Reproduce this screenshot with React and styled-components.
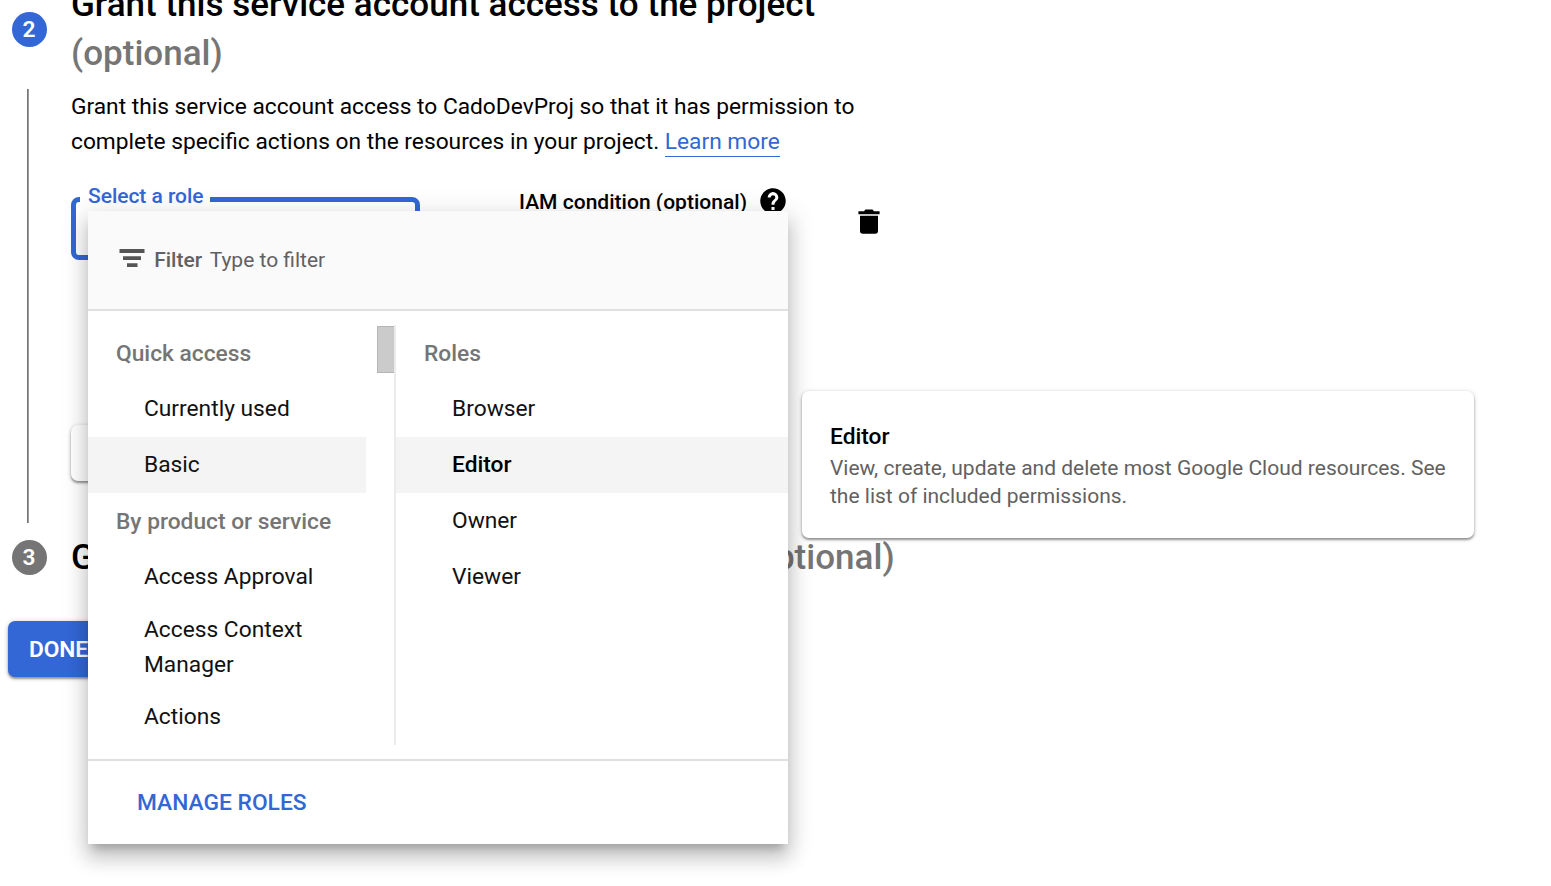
import React from 'react';
import styled, { createGlobalStyle } from 'styled-components';

const Global = createGlobalStyle`
  * { box-sizing: border-box; }
  body { margin: 0; background: #fff; font-family: Roboto, "Liberation Sans", sans-serif; overflow: hidden; }
`;

const BLUE = '#3367d6';

const Page = styled.main`
  position: relative;
  width: 1551px;
  height: 886px;
  overflow: hidden;
  color: #000;
  font-size: 22.75px;
  line-height: 35px;
  display: flow-root;
`;

const Step = styled.section`
  display: grid;
  grid-template-columns: 71px 830px;
  height: ${(p) => p.$height}px;
`;

const Rail = styled.div`
  display: flex;
  flex-direction: column;
  padding: ${(p) => p.$top}px 0 0 12px;
`;

const StepNumber = styled.div`
  width: 35px;
  height: 35px;
  padding-right: 1px;
  border-radius: 50%;
  background: ${(p) => (p.$active ? BLUE : '#757575')};
  color: #fff;
  font-weight: 600;
  font-size: 22.75px;
  text-align: center;
`;

const Connector = styled.div`
  width: 2px;
  height: 434px;
  margin: 42px 0 0 15px;
  background: #757575;
  border-right: 1px solid #9a9a9a;
`;

const StepBody = styled.div`
  display: flex;
  flex-direction: column;
`;

const Title = styled.h2`
  margin: ${(p) => p.$offset}px 0 0;
  font-size: 35px;
  line-height: 49px;
  font-weight: 500;
  letter-spacing: 0.02px;
  white-space: nowrap;
  span { color: #757575; }
`;

const Description = styled.p`
  margin: 11px 0 0;
  font-size: 22.74px;
  white-space: nowrap;
`;

const Link = styled.a`
  color: ${BLUE};
  border-bottom: 1px solid ${BLUE};
  padding-bottom: 1px;
`;

const RoleRow = styled.div`
  display: flex;
  align-items: flex-start;
  height: 63px;
  margin-top: 38px;
`;

const RoleField = styled.fieldset`
  width: 349px;
  height: 75px;
  margin: -12px 99px 0 0;
  padding: 0 0 0 4px;
  border: 5px solid ${BLUE};
  border-radius: 8px;
  min-width: 0;
`;

const FieldLabel = styled.legend`
  padding: 0 7px 6px 8px;
  font-size: 21px;
  line-height: 22px;
  font-weight: 500;
  letter-spacing: -0.04px;
  color: ${BLUE};
`;

const Condition = styled.div`
  display: flex;
  align-items: center;
  gap: 13px;
  width: 339px;
  height: 28px;
  margin-top: -9px;
  font-size: 21px;
  font-weight: 500;
  letter-spacing: 0.02px;
  svg { margin-top: -2px; }
`;

const DeleteIcon = styled.svg`
  width: 22px;
  height: 25px;
  margin-top: 12px;
`;

const AddRole = styled.button`
  width: 300px;
  height: 56px;
  margin-top: 165px;
  border: 0;
  border-radius: 7px;
  background: #fff;
  box-shadow: 0 2px 2px rgba(0,0,0,.3), 0 1px 4px rgba(0,0,0,.25);
`;

const DoneButton = styled.button`
  display: block;
  width: 104px;
  height: 56px;
  margin: 0 0 0 8px;
  padding: 0 0 0 21px;
  border: 0;
  border-radius: 7px;
  background: ${BLUE};
  color: #fff;
  font: 600 22.75px Roboto, sans-serif;
  letter-spacing: -0.1px;
  text-align: left;
  box-shadow: 0 2px 2px rgba(0,0,0,.3), 0 1px 5px rgba(0,0,0,.25);
`;

const RoleMenu = styled.div`
  position: absolute;
  left: 88px;
  top: 211px;
  width: 700px;
  height: 633px;
  display: flex;
  flex-direction: column;
  background: #fff;
  color: #111;
  box-shadow: 0 8.75px 8.75px -5.25px rgba(0,0,0,.2), 0 14px 17.5px 1.75px rgba(0,0,0,.14), 0 5.25px 24.5px 3.5px rgba(0,0,0,.12);
`;

const FilterBar = styled.div`
  display: flex;
  align-items: center;
  height: 100px;
  padding: 0 0 0 31px;
  background: #fafafa;
  border-bottom: 2px solid #e0e0e0;
  font-size: 21px;
  color: #616161;
  svg { margin-top: -4px; }
  b { font-weight: 500; margin: 0 7.5px 0 9.2px; }
`;

const Columns = styled.div`
  display: flex;
  height: 448px;
  padding: 14px 0;
`;

const Column = styled.div`
  display: flex;
  flex-direction: column;
  width: ${(p) => p.$width}px;
`;

const Categories = styled.div`
  display: flex;
  justify-content: space-between;
  width: 308px;
  border-right: 2px solid #ebebeb;
`;

const ScrollThumb = styled.div`
  width: 17px;
  height: 47px;
  margin-top: 1px;
  background: #cbcbcb;
  border: 1px solid #b5b5b5;
  border-right: 0;
`;

const GroupLabel = styled.div`
  height: 56px;
  padding: 11px 0 0 28px;
  color: #757575;
  font-weight: 500;
`;

const Option = styled.div`
  display: flex;
  align-items: center;
  height: ${(p) => (p.$tall ? 84 : 56)}px;
  padding: ${(p) => (p.$tall ? '0 28px 0 56px' : '0 28px 2px 56px')};
  background: ${(p) => (p.$selected ? '#f4f4f4' : 'transparent')};
  color: ${(p) => (p.$bold ? '#000' : '#111')};
  font-weight: ${(p) => (p.$bold ? 500 : 400)};
`;

const MenuFooter = styled.div`
  display: flex;
  align-items: center;
  height: 85px;
  padding-left: 49px;
  border-top: 2px solid #e0e0e0;
  color: ${BLUE};
  font-weight: 500;
  letter-spacing: 0.02px;
`;

const RoleTooltip = styled.aside`
  position: absolute;
  left: 802px;
  top: 391px;
  width: 672px;
  height: 147px;
  padding: 28px;
  border-radius: 7px;
  background: #fff;
  box-shadow: 0 2px 2px rgba(0,0,0,.3), 0 1px 4px rgba(0,0,0,.25);
  strong { display: block; font-weight: 500; }
  p { margin: 0; font-size: 21px; line-height: 28px; color: #616161; white-space: nowrap; }
`;

const Icon = styled.svg`
  display: block;
  flex: none;
`;

const HelpIcon = () => (
  <Icon width="26" height="26" viewBox="1.8 1.8 20.4 20.4">
    <path d="M12 2C6.480 2 2 6.480 2 12s4.480 10 10 10 10-4.480 10-10S17.520 2 12 2zm1.200 17h-2.400v-2.300h2.400V19zm2-7.500-.9.900C13.500 13.200 13.200 13.800 13.200 15h-2.400v-.5c0-1.100.4-2 1.200-2.800l1.200-1.200c.4-.4.6-.9.600-1.400 0-1-.8-1.700-1.800-1.700s-1.800.8-1.800 1.800H7.800a4.200 4.200 0 0 1 8.400 0c0 .9-.4 1.700-1 2.300z" />
  </Icon>
);

const FilterIcon = () => (
  <Icon width="26" height="20" viewBox="0 0 26 20" fill="#555">
    <path d="M.5 1h25v4H.5zM4 8.300h18V12H4zM8 15.200h10.500v3.800H8z" />
  </Icon>
);

export default function App() {
  return (
    <Page>
      <Global />
      <Step $height={532}>
        <Rail $top={12}>
          <StepNumber $active>2</StepNumber>
          <Connector />
        </Rail>
        <StepBody>
          <Title $offset={-20}>
            Grant this service account access to the project<br />
            <span>(optional)</span>
          </Title>
          <Description>
            Grant this service account access to CadoDevProj so that it has permission to<br />
            complete specific actions on the resources in your project. <Link>Learn more</Link>
          </Description>
          <RoleRow>
            <RoleField><FieldLabel>Select a role</FieldLabel></RoleField>
            <Condition>IAM condition (optional) <HelpIcon /></Condition>
            <DeleteIcon viewBox="0 0 22 25">
              <path d="M.4 2.300h5.600l1.500-1.800h7L16 2.300h5.600v2.900H.4zM2 6.700h18V22a2.800 2.800 0 0 1-2.800 2.700H4.800A2.800 2.800 0 0 1 2 22z" />
            </DeleteIcon>
          </RoleRow>
          <AddRole aria-label="Add another role" />
        </StepBody>
      </Step>
      <Step $height={89}>
        <Rail $top={8}><StepNumber>3</StepNumber></Rail>
        <StepBody>
          <Title $offset={1}>Grant users access to this service account <span>(optional)</span></Title>
        </StepBody>
      </Step>
      <DoneButton>DONE</DoneButton>

      <RoleMenu>
        <FilterBar><FilterIcon /><b>Filter</b>Type to filter</FilterBar>
        <Columns>
          <Categories>
            <Column $width={278}>
              <GroupLabel>Quick access</GroupLabel>
              <Option>Currently used</Option>
              <Option $selected>Basic</Option>
              <GroupLabel>By product or service</GroupLabel>
              <Option>Access Approval</Option>
              <Option $tall>Access Context Manager</Option>
              <Option>Actions</Option>
            </Column>
            <ScrollThumb />
          </Categories>
          <Column $width={392}>
            <GroupLabel>Roles</GroupLabel>
            <Option>Browser</Option>
            <Option $selected $bold>Editor</Option>
            <Option>Owner</Option>
            <Option>Viewer</Option>
          </Column>
        </Columns>
        <MenuFooter>MANAGE ROLES</MenuFooter>
      </RoleMenu>

      <RoleTooltip>
        <strong>Editor</strong>
        <p>View, create, update and delete most Google Cloud resources. See<br />the list of included permissions.</p>
      </RoleTooltip>
    </Page>
  );
}
